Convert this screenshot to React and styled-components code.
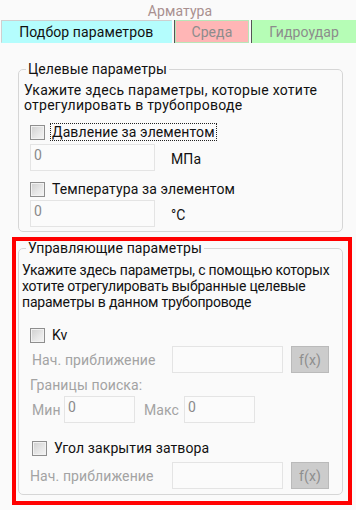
import React from "react";
import styled, { createGlobalStyle } from "styled-components";

const GlobalStyle = createGlobalStyle`
  html, body {
    margin: 0;
    padding: 0;
    background: #fafafa;
  }
  body {
    font-family: Roboto, "Noto Sans", sans-serif;
    font-size: 14px;
    letter-spacing: 0.1px;
    color: #111;
  }
`;

export default function App() {
  return (
    <>
      <GlobalStyle />
      <Page>
        <Title>Арматура</Title>
        <TabBar>
          <Tab $bg="#b4fdfd" $active $w={171}>
            Подбор параметров
          </Tab>
          <Tab $bg="#ffb6b6" $w={75} $edge="#b8e6b8">
            Среда
          </Tab>
          <Tab $bg="#b6fdb6" $w={104}>
            Гидроудар
          </Tab>
        </TabBar>

        <GroupBox $mt={19} $ml={18}>
          <Legend>Целевые параметры</Legend>
          <Body $pl={5} $pb={4}>
            <Desc $lh={15} $ls={0.25}>
              Укажите здесь параметры, которые хотите
              <br />
              отрегулировать в трубопроводе
            </Desc>
            <CheckRow $mt={10} $ml={6}>
              <CheckBox />
              <CheckLabel $focused>Давление за элементом</CheckLabel>
            </CheckRow>
            <InputRow $mt={3} $ml={6}>
              <TextInput $w={125}>0</TextInput>
              <Unit>МПа</Unit>
            </InputRow>
            <CheckRow $mt={9} $ml={6}>
              <CheckBox />
              <CheckLabel>Температура за элементом</CheckLabel>
            </CheckRow>
            <InputRow $mt={2} $ml={6}>
              <TextInput $w={125}>0</TextInput>
              <Unit>°C</Unit>
            </InputRow>
          </Body>
        </GroupBox>

        <Highlight>
          <GroupBox>
            <Legend>Управляющие параметры</Legend>
            <Body $pl={3} $pb={5}>
              <Desc $lh={16} $ls={-0.2}>
                Укажите здесь параметры, с помощью которых
                <br />
                хотите отрегулировать выбранные целевые
                <br />
                параметры в данном трубопроводе
              </Desc>
              <CheckRow $mt={16} $ml={8}>
                <CheckBox />
                <CheckLabel>Kv</CheckLabel>
              </CheckRow>
              <FieldRow $mt={2} $ml={10}>
                <Muted $w={140}>Нач. приближение</Muted>
                <TextInput $w={111} />
                <FxButton>f(x)</FxButton>
              </FieldRow>
              <Caption>Границы поиска:</Caption>
              <FieldRow $mt={3} $ml={10}>
                <Muted $w={32}>Мин</Muted>
                <TextInput $w={71}>0</TextInput>
                <Muted $w={40} $ml={9}>
                  Макс
                </Muted>
                <TextInput $w={71}>0</TextInput>
              </FieldRow>
              <CheckRow $mt={16} $ml={10}>
                <CheckBox />
                <CheckLabel>Угол закрытия затвора</CheckLabel>
              </CheckRow>
              <FieldRow $mt={5} $ml={8}>
                <Muted $w={142}>Нач. приближение</Muted>
                <TextInput $w={111} />
                <FxButton>f(x)</FxButton>
              </FieldRow>
            </Body>
          </GroupBox>
        </Highlight>
      </Page>
    </>
  );
}

const Page = styled.div`
  width: 356px;
  height: 510px;
  overflow: hidden;
  background: #fafafa;
`;

const Title = styled.div`
  height: 20px;
  line-height: 22px;
  text-align: center;
  padding-left: 4px;
  color: #a99090;
`;

const TabBar = styled.div`
  display: flex;
  height: 23px;
  padding-left: 1px;
`;

const Tab = styled.div`
  box-sizing: border-box;
  width: ${(p) => p.$w}px;
  margin-right: 3px;
  display: flex;
  align-items: center;
  justify-content: center;
  background: ${(p) => p.$bg};
  color: ${(p) => (p.$active ? "#111" : "#8c8c8c")};
  border: 1px solid ${(p) => p.$edge || p.$bg};
  border-top-color: ${(p) => (p.$active ? "#cfcfcf" : p.$edge || p.$bg)};
  border-left-color: ${(p) => (p.$active ? "#cfcfcf" : p.$edge || p.$bg)};
  box-shadow: ${(p) =>
    p.$active || p.$edge ? "2px 0 0 #fafafa, 3px 0 0 #555" : "none"};

  &:last-child {
    margin-right: 0;
    box-shadow: none;
  }
`;

const GroupBox = styled.fieldset`
  box-sizing: border-box;
  width: 325px;
  margin: ${(p) => p.$mt || 0}px 0 0 ${(p) => p.$ml || 0}px;
  padding: 0;
  border: 1px solid #d6d6d6;
  border-radius: 5px;
  min-inline-size: 0;
`;

const Legend = styled.legend`
  margin-left: 7px;
  padding: 0 2px;
  line-height: 15px;
  color: #111;
`;

const Body = styled.div`
  display: flex;
  flex-direction: column;
  align-items: flex-start;
  padding: 6px 0 ${(p) => p.$pb}px ${(p) => p.$pl}px;
`;

const Desc = styled.div`
  line-height: ${(p) => p.$lh}px;
  letter-spacing: ${(p) => p.$ls}px;
  white-space: nowrap;
`;

const CheckRow = styled.div`
  display: flex;
  align-items: center;
  gap: 5px;
  height: 18px;
  margin: ${(p) => p.$mt}px 0 0 ${(p) => p.$ml}px;
`;

const CheckBox = styled.span`
  box-sizing: border-box;
  width: 15px;
  height: 15px;
  border: 1px solid #8e8e8e;
  background: linear-gradient(135deg, #cfcfcf 0%, #e8e8e8 60%, #f4f4f4 100%);
  box-shadow: inset 0 0 0 1px #f2f2f2;
`;

const CheckLabel = styled.span`
  padding: 0 1px;
  line-height: 16px;
  border: 1px dotted ${(p) => (p.$focused ? "#222" : "transparent")};
`;

const InputRow = styled.div`
  display: flex;
  align-items: flex-end;
  margin: ${(p) => p.$mt}px 0 0 ${(p) => p.$ml}px;
`;

const TextInput = styled.div`
  box-sizing: border-box;
  width: ${(p) => p.$w}px;
  height: 27px;
  border: 1px solid #e4e4e4;
  background: #fbfbfb;
  color: #8a8a8a;
  padding: 0 3px;
  line-height: 20px;
`;

const Unit = styled.span`
  margin: 0 0 4px 16px;
`;

const FieldRow = styled.div`
  display: flex;
  align-items: center;
  margin: ${(p) => p.$mt}px 0 0 ${(p) => p.$ml}px;
`;

const Muted = styled.span`
  flex: none;
  width: ${(p) => p.$w}px;
  margin-left: ${(p) => p.$ml || 0}px;
  color: #a3a3a3;
`;

const Caption = styled.div`
  margin: 4px 0 0 8px;
  line-height: 16px;
  color: #a3a3a3;
`;

const FxButton = styled.div`
  box-sizing: border-box;
  width: 38px;
  height: 27px;
  margin-left: 8px;
  display: flex;
  align-items: center;
  justify-content: center;
  background: #cccccc;
  border: 1px solid #bababa;
  color: #8e8e8e;
`;

const Highlight = styled.div`
  box-sizing: border-box;
  width: 340px;
  margin: 5px 0 0 12px;
  border: 4px solid #ff0000;
  padding: 0 5px 6px 2px;
`;
